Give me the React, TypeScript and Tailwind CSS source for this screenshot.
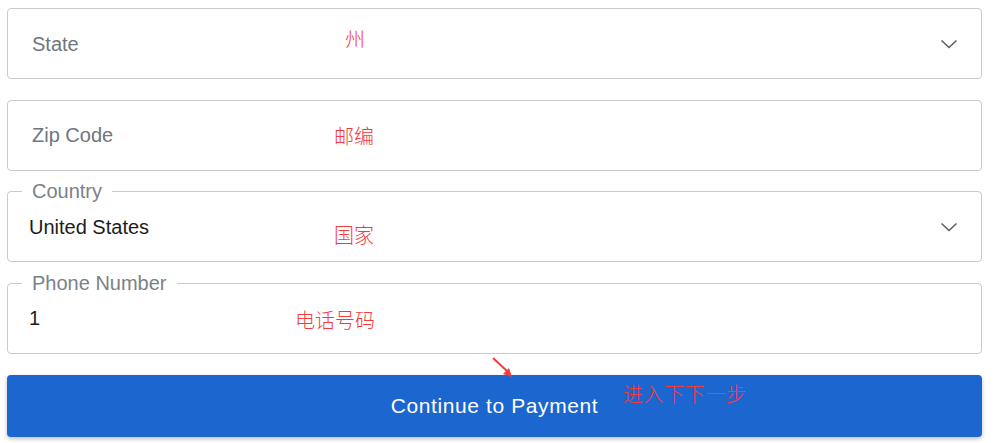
import React from 'react';

const font = { fontFamily: '"Liberation Sans", Arial, sans-serif' };

function Chevron() {
  return (
    <svg width="18" height="10" viewBox="0 0 18 10" className="shrink-0">
      <path d="M1.5 1.5 L9 8.5 L16.5 1.5" fill="none" stroke="#5f5f5f" strokeWidth="1.6" />
    </svg>
  );
}

function Note({ text, className }: { text: string; className: string }) {
  return (
    <span
      className={`absolute text-[20px] leading-none text-[#f23c3c] whitespace-nowrap ${className}`}
      style={{ fontFamily: '"Noto Sans CJK SC", sans-serif', fontWeight: 300 }}
    >
      {text}
    </span>
  );
}

function Field({
  placeholder,
  label,
  value,
  select,
  children,
}: {
  placeholder?: string;
  label?: string;
  value?: string;
  select?: boolean;
  children?: React.ReactNode;
}) {
  return (
    <div className="relative h-[71px] rounded-[4px] border border-[#c8cacc] flex items-center pr-[23px]">
      {label && (
        <span className="absolute -top-[12px] left-[14px] px-[10px] bg-white text-[20px] leading-[22px] text-[#7a8189]">
          {label}
        </span>
      )}
      {placeholder ? (
        <span className="pl-[24px] text-[20px] text-[#6f767e]">{placeholder}</span>
      ) : (
        <span className="pl-[21px] text-[20px] text-[#1c1c1c]">{value}</span>
      )}
      <div className="flex-1" />
      {select && <Chevron />}
      {children}
    </div>
  );
}

export default function App() {
  return (
    <div className="w-[1000px] h-[443px] bg-white overflow-hidden" style={font}>
      <div className="relative w-[975px] ml-[7px] pt-[8px] flex flex-col gap-[20.67px]">
        <Field placeholder="State" select>
          <Note text="州" className="left-[337px] top-[20px]" />
        </Field>
        <Field placeholder="Zip Code">
          <Note text="邮编" className="left-[326px] top-[25px]" />
        </Field>
        <Field label="Country" value="United States" select>
          <Note text="国家" className="left-[326px] top-[33px]" />
        </Field>
        <Field label="Phone Number" value="1">
          <Note text="电话号码" className="left-[287px] top-[26px]" />
        </Field>
        <button className="relative h-[62px] rounded-[4px] bg-[#1c66cf] text-white text-[21px] tracking-[0.6px] shadow-[0_2px_4px_rgba(0,0,0,0.25)]">
          Continue to Payment
          <Note text="进入下下一步" className="left-[616px] top-[9px]" />
        </button>
        <svg
          className="absolute left-[484px] top-[356px]"
          width="24"
          height="24"
          viewBox="0 0 24 24"
        >
          <path d="M2 2 L16 15" stroke="#f23c3c" strokeWidth="2" />
          <path d="M12 18 L21 21 L18 12 Z" fill="#f23c3c" />
        </svg>
      </div>
    </div>
  );
}
